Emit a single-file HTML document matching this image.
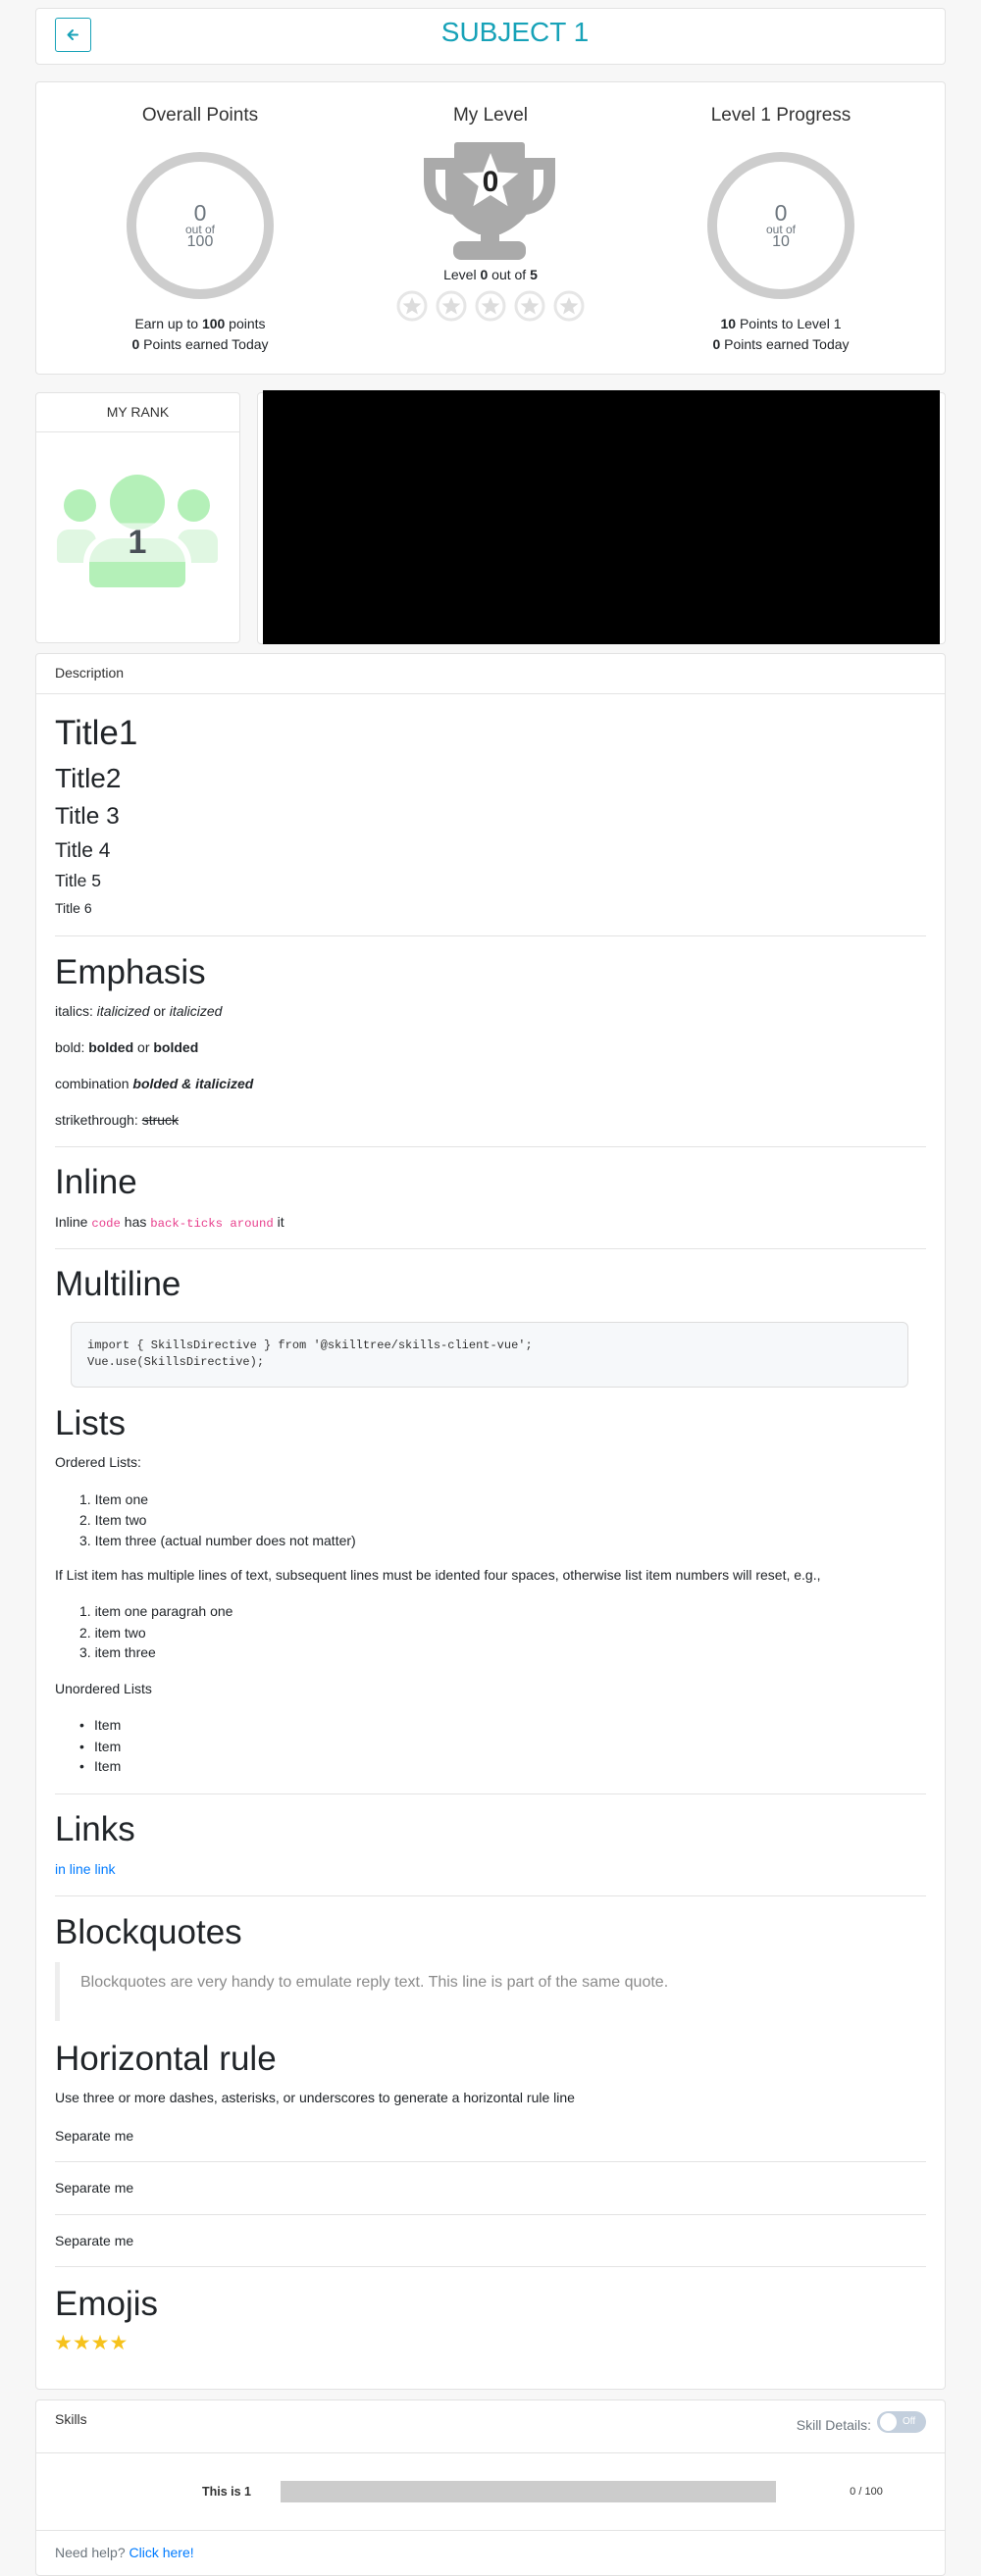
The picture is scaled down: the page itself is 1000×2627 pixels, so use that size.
<!DOCTYPE html>
<html><head><meta charset="utf-8"><style>
*{box-sizing:border-box;margin:0;padding:0}
body{width:1000px;height:2627px;background:#f7f7f7;font-family:"Liberation Sans",Arial,sans-serif;color:#212529;position:relative;overflow:hidden;font-size:14px}
.card{position:absolute;background:#fff;border:1px solid #e2e2e2;border-radius:4px}
.a{position:absolute;white-space:nowrap}
.t{position:absolute;white-space:nowrap;left:56px;font-size:14px;line-height:20px}
.h1{position:absolute;left:56px;font-size:35px;line-height:42px;font-weight:400;white-space:nowrap}
.hr{position:absolute;left:56px;width:888px;height:1px;background:#e3e3e3}
code{font-family:"Liberation Mono",monospace;color:#e83e8c;font-size:12.3px}
.c{text-align:center}
a{color:#007bff;text-decoration:none}
</style></head><body>

<div class="card" style="left:36px;top:8px;width:928px;height:58px"></div>
<div class="a" style="left:56px;top:18px;width:37px;height:35px;border:1px solid #17a2b8;border-radius:3px"></div>
<svg class="a" style="left:66px;top:27px" width="17" height="17" viewBox="0 0 17 17"><path d="M13 8.5H4M8 4L3.5 8.5L8 13" stroke="#17a2b8" stroke-width="2" fill="none" stroke-linecap="round" stroke-linejoin="round"/></svg>
<div class="a c" style="left:400px;width:250px;top:16px;font-size:28px;line-height:34px;color:#17a2b8">SUBJECT 1</div>

<div class="card" style="left:36px;top:83px;width:928px;height:299px"></div>
<div class="a c" style="left:104px;width:200px;top:106px;font-size:19px;line-height:24px;color:#333">Overall Points</div>
<div class="a c" style="left:400px;width:200px;top:106px;font-size:19px;line-height:24px;color:#333">My Level</div>
<div class="a c" style="left:696px;width:200px;top:106px;font-size:19px;line-height:24px;color:#333">Level 1 Progress</div>

<div class="a" style="left:129px;top:155px;width:150px;height:150px;border:10px solid #cdcdcd;border-radius:50%"></div>
<div class="a c" style="left:154px;width:100px;top:203px;font-size:23px;line-height:28px;color:#6c757d">0</div>
<div class="a c" style="left:154px;width:100px;top:227px;font-size:12px;line-height:14px;color:#6c757d">out of</div>
<div class="a c" style="left:154px;width:100px;top:238px;font-size:16px;line-height:18px;color:#6c757d">100</div>

<div class="a" style="left:721px;top:155px;width:150px;height:150px;border:10px solid #cdcdcd;border-radius:50%"></div>
<div class="a c" style="left:746px;width:100px;top:203px;font-size:23px;line-height:28px;color:#6c757d">0</div>
<div class="a c" style="left:746px;width:100px;top:227px;font-size:12px;line-height:14px;color:#6c757d">out of</div>
<div class="a c" style="left:746px;width:100px;top:238px;font-size:16px;line-height:18px;color:#6c757d">10</div>

<div class="a c" style="left:104px;width:200px;top:320px;font-size:14px;line-height:20px">Earn up to <b>100</b> points</div>
<div class="a c" style="left:104px;width:200px;top:341px;font-size:14px;line-height:20px"><b>0</b> Points earned Today</div>
<div class="a c" style="left:696px;width:200px;top:320px;font-size:14px;line-height:20px"><b>10</b> Points to Level 1</div>
<div class="a c" style="left:696px;width:200px;top:341px;font-size:14px;line-height:20px"><b>0</b> Points earned Today</div>

<svg class="a" style="left:432px;top:145px" width="134" height="120" viewBox="0 0 134 120">
<rect x="31" y="0" width="72" height="20" rx="3" fill="#aaa"/>
<path d="M0,16 H134 V40 C134,60 120,72 104,74 L104,62 C115,60 122,52 122,40 V28 H12 V40 C12,52 19,60 30,62 L30,74 C14,72 0,60 0,40 Z" fill="#aaa"/>
<path d="M22,16 H112 V50 C112,75 92,88 78,94 H56 C42,88 22,75 22,50 Z" fill="#aaa"/>
<rect x="58" y="90" width="19" height="16" fill="#aaa"/>
<rect x="30" y="101" width="74" height="19" rx="8" fill="#aaa"/>
<path d="M68,11 L75.6,30.5 L96.5,31.7 L80.3,44.9 L85.6,65.3 L68,54 L50.4,65.3 L55.7,44.9 L39.5,31.7 L60.4,30.5 Z" fill="#fff"/>
</svg>
<div class="a c" style="left:450px;width:100px;top:168px;font-size:30px;line-height:36px;font-weight:bold;color:#222">0</div>
<div class="a c" style="left:400px;width:200px;top:270px;font-size:14px;line-height:20px">Level <b>0</b> out of <b>5</b></div>
<svg class="a" style="left:403px;top:296px" width="194" height="32" viewBox="0 0 194 32">
<g fill="none" stroke="#e6e6e6" stroke-width="3">
<circle cx="17" cy="16" r="14"/><circle cx="57" cy="16" r="14"/><circle cx="97" cy="16" r="14"/><circle cx="137" cy="16" r="14"/><circle cx="177" cy="16" r="14"/></g>
<g fill="#dcdcdc">
<path id="s" d="M17,7 L19.6,13.3 L26.4,13.6 L21.1,17.9 L22.9,24.5 L17,20.8 L11.1,24.5 L12.9,17.9 L7.6,13.6 L14.4,13.3 Z"/>
<use href="#s" x="40"/><use href="#s" x="80"/><use href="#s" x="120"/><use href="#s" x="160"/></g>
</svg>

<div class="card" style="left:36px;top:400px;width:209px;height:256px"></div>
<div class="a c" style="left:36px;width:209px;top:411px;font-size:14px;line-height:18px;color:#333">MY RANK</div>
<div class="a" style="left:37px;top:440px;width:207px;height:1px;background:#e3e3e3"></div>
<div class="a" style="left:58px;top:540px;width:40px;height:34px;border-radius:12px 12px 4px 4px;background:#e0f7e2"></div>
<div class="a" style="left:181px;top:540px;width:41px;height:34px;border-radius:12px 12px 4px 4px;background:#e0f7e2"></div>
<div class="a" style="left:65px;top:499px;width:33px;height:33px;border-radius:50%;background:#b4f0b8"></div>
<div class="a" style="left:181px;top:499px;width:33px;height:33px;border-radius:50%;background:#b4f0b8"></div>
<div class="a" style="left:85px;top:544px;width:110px;height:58px;border-radius:30px 30px 8px 8px;background:#fff"></div>
<div class="a" style="left:91px;top:549px;width:98px;height:50px;border-radius:26px 26px 8px 8px;background:linear-gradient(#e0f7e2 0,#e0f7e2 48%,#b4f0b8 48%)"></div>
<div class="a" style="left:112px;top:484px;width:56px;height:56px;border-radius:50%;background:linear-gradient(#b4f0b8 0,#b4f0b8 88%,#e0f7e2 88%)"></div>
<div class="a c" style="left:110px;width:60px;top:533px;font-size:34px;line-height:40px;font-weight:bold;color:#495057">1</div>

<div class="card" style="left:262px;top:400px;width:702px;height:257px"></div>
<div class="a" style="left:268px;top:398px;width:690px;height:259px;background:#000"></div>

<div class="card" style="left:36px;top:666px;width:928px;height:1771px"></div>
<div class="a" style="left:56px;top:677px;font-size:14px;line-height:18px;color:#333">Description</div>
<div class="a" style="left:37px;top:707px;width:926px;height:1px;background:#e3e3e3"></div>

<div class="h1" style="top:727px">Title1</div>
<div class="a" style="left:56px;top:777px;font-size:28px;line-height:34px">Title2</div>
<div class="a" style="left:56px;top:818px;font-size:24.5px;line-height:29px">Title 3</div>
<div class="a" style="left:56px;top:855px;font-size:21px;line-height:25px">Title 4</div>
<div class="a" style="left:56px;top:888px;font-size:17.5px;line-height:21px">Title 5</div>
<div class="a" style="left:56px;top:918px;font-size:14px;line-height:17px">Title 6</div>
<div class="hr" style="top:954px"></div>

<div class="h1" style="top:971px">Emphasis</div>
<div class="t" style="top:1021px">italics: <i>italicized</i> or <i>italicized</i></div>
<div class="t" style="top:1058px">bold: <b>bolded</b> or <b>bolded</b></div>
<div class="t" style="top:1095px">combination <b><i>bolded &amp; italicized</i></b></div>
<div class="t" style="top:1132px">strikethrough: <s>struck</s></div>
<div class="hr" style="top:1169px"></div>

<div class="h1" style="top:1185px">Inline</div>
<div class="t" style="top:1236px">Inline <code>code</code> has <code>back-ticks around</code> it</div>
<div class="hr" style="top:1273px"></div>

<div class="h1" style="top:1289px">Multiline</div>
<div class="a" style="left:72px;top:1348px;width:854px;height:67px;background:#f6f8fa;border:1px solid #ddd;border-radius:6px"></div>
<div class="a" style="left:89px;top:1364px;font-family:'Liberation Mono',monospace;font-size:12px;line-height:17px;color:#333">import { SkillsDirective } from '@skilltree/skills-client-vue';<br>Vue.use(SkillsDirective);</div>

<div class="h1" style="top:1431px">Lists</div>
<div class="t" style="top:1481px">Ordered Lists:</div>
<div class="t" style="left:81px;top:1519px">1. Item one</div>
<div class="t" style="left:81px;top:1540px">2. Item two</div>
<div class="t" style="left:81px;top:1561px">3. Item three (actual number does not matter)</div>
<div class="t" style="top:1596px">If List item has multiple lines of text, subsequent lines must be idented four spaces, otherwise list item numbers will reset, e.g.,</div>
<div class="t" style="left:81px;top:1633px">1. item one paragrah one</div>
<div class="t" style="left:81px;top:1655px">2. item two</div>
<div class="t" style="left:81px;top:1675px">3. item three</div>
<div class="t" style="top:1712px">Unordered Lists</div>
<div class="t" style="left:81px;top:1749px">•</div><div class="t" style="left:96px;top:1749px">Item</div>
<div class="t" style="left:81px;top:1771px">•</div><div class="t" style="left:96px;top:1771px">Item</div>
<div class="t" style="left:81px;top:1791px">•</div><div class="t" style="left:96px;top:1791px">Item</div>
<div class="hr" style="top:1829px"></div>

<div class="h1" style="top:1845px">Links</div>
<div class="t" style="top:1896px"><a>in line link</a></div>
<div class="hr" style="top:1933px"></div>

<div class="h1" style="top:1950px">Blockquotes</div>
<div class="a" style="left:56px;top:2001px;width:5px;height:60px;background:#eee"></div>
<div class="a" style="left:82px;top:2012px;font-size:16px;line-height:20px;color:#8a8a8a">Blockquotes are very handy to emulate reply text. This line is part of the same quote.</div>

<div class="h1" style="top:2079px">Horizontal rule</div>
<div class="t" style="top:2129px">Use three or more dashes, asterisks, or underscores to generate a horizontal rule line</div>
<div class="t" style="top:2168px">Separate me</div>
<div class="hr" style="top:2204px"></div>
<div class="t" style="top:2221px">Separate me</div>
<div class="hr" style="top:2258px"></div>
<div class="t" style="top:2275px">Separate me</div>
<div class="hr" style="top:2311px"></div>

<div class="h1" style="top:2329px">Emojis</div>
<div class="a" style="left:55px;top:2378px;font-size:21px;line-height:24px;color:#f6c21c">★★★★</div>

<div class="card" style="left:36px;top:2447px;width:928px;height:180px"></div>
<div class="a" style="left:56px;top:2458px;font-size:14px;line-height:18px;color:#333">Skills</div>
<div class="a" style="left:760px;width:128px;text-align:right;top:2464px;font-size:14px;line-height:18px;color:#6c757d">Skill Details:</div>
<div class="a" style="left:894px;top:2459px;width:50px;height:22px;border-radius:11px;background:#c3cfdd"></div>
<div class="a" style="left:897px;top:2461px;width:17px;height:18px;border-radius:50%;background:#fff"></div>
<div class="a" style="left:920px;top:2463px;font-size:10px;line-height:13px;color:#fff">Off</div>
<div class="a" style="left:37px;top:2501px;width:926px;height:1px;background:#e3e3e3"></div>
<div class="a" style="left:150px;width:106px;text-align:right;top:2532px;font-size:12.5px;line-height:18px;font-weight:bold;color:#333">This is 1</div>
<div class="a" style="left:286px;top:2530px;width:505px;height:22px;background:#ccc"></div>
<div class="a" style="left:860px;width:46px;text-align:center;top:2533px;font-size:11px;line-height:16px;color:#333">0 / 100</div>
<div class="a" style="left:37px;top:2580px;width:926px;height:1px;background:#e3e3e3"></div>
<div class="a" style="left:56px;top:2594px;font-size:14px;line-height:18px;color:#6c757d">Need help? <a>Click here!</a></div>

</body></html>
